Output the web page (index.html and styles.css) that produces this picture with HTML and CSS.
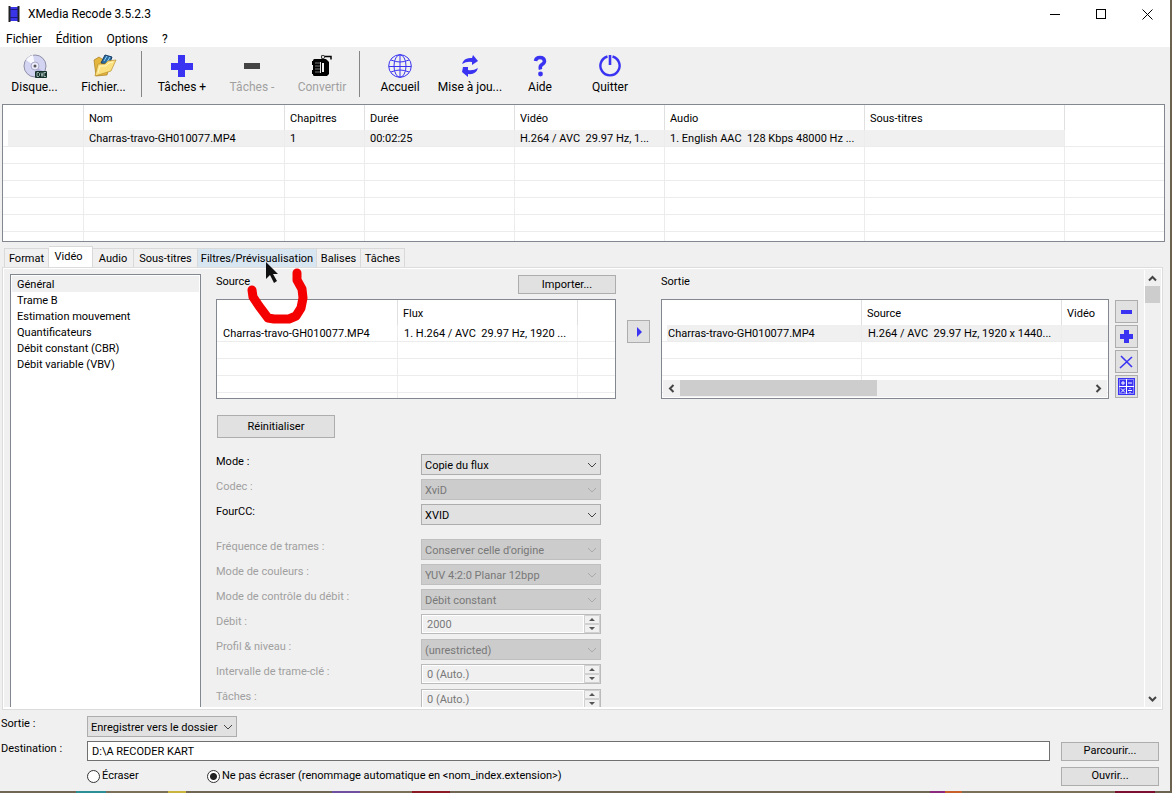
FILE: index.html
```html
<!DOCTYPE html>
<html lang="fr">
<head>
    <meta charset="UTF-8">
    <meta name="viewport" content="width=device-width, initial-scale=1.0">
    <title>XMedia Recode 3.5.2.3</title>
    <link rel="stylesheet" href="styles.css">
</head>
<body>

<div class="window">

<header class="titlebar">
    <svg class="app-icon" width="12" height="16" viewBox="0 0 12 16">
        <rect x="1" y="1" width="10" height="14" fill="#3a34e8"/>
        <path d="M1.5 0v16M10.5 0v16" stroke="#222" stroke-width="2"/>
        <path d="M2 3.500h8M2 11.500h8" stroke="#1c1a80"/>
    </svg>
    <h1>XMedia Recode 3.5.2.3</h1>
    <div class="window-buttons">
        <button aria-label="Réduire"><svg width="11" height="11"><path d="M0 5.500h10" stroke="#000"/></svg></button>
        <button aria-label="Agrandir"><svg width="11" height="11"><rect x="0.500" y="0.500" width="9" height="9" fill="none" stroke="#000"/></svg></button>
        <button aria-label="Fermer"><svg width="11" height="11"><path d="M0.500 0.500l10 10M10.500 0.500l-10 10" stroke="#000"/></svg></button>
    </div>
</header>

<nav class="menu">
    <button>Fichier</button>
    <button>Édition</button>
    <button>Options</button>
    <button>?</button>
</nav>

<div class="toolbar">
    <div class="tool-group files">
        <button class="tool">
            <svg width="26" height="24" viewBox="0 0 26 24">
                <circle cx="13" cy="12" r="11" fill="#d3d3f2" stroke="#8f8fa8"/>
                <path d="M13 12L4 6a11 11 0 0 1 7-5z" fill="#f8f8ff"/>
                <path d="M13 12l9 6a11 11 0 0 1-6 4z" fill="#b6b6dd"/>
                <circle cx="13" cy="12" r="4" fill="#ececfa" stroke="#a9a9c8"/>
                <circle cx="13" cy="12" r="1.500" fill="#555"/>
                <rect x="13" y="17" width="12" height="7" rx="1" fill="#16302c"/>
                <path d="M15 18.500v4h1.500l1-1v-2l-1-1zM19 18.500l1 4 1-4M24 18.500h-2v4h2" fill="none" stroke="#cfe5dd" stroke-width="0.700"/>
            </svg>
            <span>Disque...</span>
        </button>
        <button class="tool">
            <svg width="26" height="24" viewBox="0 0 26 24">
                <path d="M3 6l5-3 3 2 9 2-4 14-11 1z" fill="#e5b63c" stroke="#a67b1c" stroke-width="0.700"/>
                <path d="M10 9l4-8 7 2-3 8z" fill="#2c6ca4" stroke="#173c63"/>
                <path d="M13 7l3-5M16 8l3-5" stroke="#8fd3f2"/>
                <path d="M4 22l3-12 7 0 3-3 8-1-5 11z" fill="#fbe080" stroke="#b98e2c" stroke-width="0.700"/>
                <path d="M7 19l2-7 6 0 3-3 4-1" fill="none" stroke="#fff5bf"/>
            </svg>
            <span>Fichier...</span>
        </button>
    </div>
    <div class="tool-separator"></div>
    <div class="tool-group">
        <button class="tool">
            <svg width="24" height="24" viewBox="0 0 24 24"><path d="M8 1h7v8h8v7h-8v7h-7v-7h-7v-7h7z" fill="#3a34f2"/></svg>
            <span>Tâches +</span>
        </button>
        <button class="tool" disabled>
            <svg width="24" height="24" viewBox="0 0 24 24"><rect x="4" y="9" width="16" height="6" fill="#444"/></svg>
            <span>Tâches -</span>
        </button>
        <button class="tool" disabled>
            <svg width="24" height="24" viewBox="0 0 24 24">
                <rect x="3" y="5" width="14" height="17" rx="1.500" fill="#000"/>
                <path d="M2 7h2v4h-2zM2 16h2v4h-2z" fill="#000"/>
                <path d="M15 6h2l2 2v12l-2 2h-2z" fill="#000"/>
                <path d="M5 9h5M5 12h5M5 15h5M5 18h5" stroke="#777"/>
                <path d="M10.500 8v11" stroke="#ddd"/>
                <rect x="12" y="9" width="2" height="9" fill="#f0f0f0"/>
                <path d="M12 4.500v-3M13 2.500h8v3" fill="none" stroke="#000" stroke-width="1.500"/>
                <circle cx="13" cy="3" r="1.700" fill="#ddd" stroke="#222" stroke-width="0.800"/>
            </svg>
            <span>Convertir</span>
        </button>
    </div>
    <div class="tool-separator"></div>
    <div class="tool-group">
        <button class="tool">
            <svg width="26" height="24" viewBox="0 0 26 24">
                <g fill="none" stroke="#3a34f2">
                    <circle cx="13" cy="12" r="11.300"/>
                    <ellipse cx="13" cy="12" rx="6" ry="11.300"/>
                    <path d="M13 1v22M2 12.500h22M4 6q9 4 18 0M4 18q9-4 18 0"/>
                </g>
            </svg>
            <span>Accueil</span>
        </button>
        <button class="tool">
            <svg width="24" height="24" viewBox="0 0 24 24">
                <path d="M4 10Q6 3 14 4l1-3 5 6-6 4V8Q9 7 4 10z" fill="#3a34f2"/>
                <path d="M20 14q-2 7-10 6v3l-6-5 1-5 5 0v3q5 1 10-2z" fill="#3a34f2"/>
            </svg>
            <span>Mise à jou...</span>
        </button>
        <button class="tool">
            <svg width="24" height="24" viewBox="0 0 24 24">
                <path d="M7.500 7Q8 3.500 12 3.500T16.500 7Q16.500 9 14 10.500T12.500 15.500" fill="none" stroke="#3a34f2" stroke-width="3.500"/>
                <circle cx="12.500" cy="20" r="2.400" fill="#3a34f2"/>
            </svg>
            <span>Aide</span>
        </button>
        <button class="tool">
            <svg width="24" height="24" viewBox="0 0 24 24">
                <path d="M9.500 2.500a9.600 9.600 0 1 0 5 0" fill="none" stroke="#3a34f2" stroke-width="2.400"/>
                <path d="M12 1v10" stroke="#3a34f2" stroke-width="2.600"/>
            </svg>
            <span>Quitter</span>
        </button>
    </div>
</div>

<div class="list file-list">
    <table>
        <colgroup>
            <col class="col-icon"><col class="col-name"><col class="col-small"><col class="col-medium"><col class="col-medium"><col class="col-large"><col class="col-large"><col>
        </colgroup>
        <thead>
            <tr><th></th><th>Nom</th><th>Chapitres</th><th>Durée</th><th>Vidéo</th><th>Audio</th><th>Sous-titres</th><th></th></tr>
        </thead>
        <tbody>
            <tr class="selected"><td></td><td>Charras-travo-GH010077.MP4</td><td>1</td><td>00:02:25</td><td>H.264 / AVC  29.97 Hz, 1...</td><td>1. English AAC  128 Kbps 48000 Hz ...</td><td></td><td class="blank"></td></tr>
            <tr><td></td><td></td><td></td><td></td><td></td><td></td><td></td><td></td></tr>
            <tr><td></td><td></td><td></td><td></td><td></td><td></td><td></td><td></td></tr>
            <tr><td></td><td></td><td></td><td></td><td></td><td></td><td></td><td></td></tr>
            <tr><td></td><td></td><td></td><td></td><td></td><td></td><td></td><td></td></tr>
            <tr><td></td><td></td><td></td><td></td><td></td><td></td><td></td><td></td></tr>
            <tr><td></td><td></td><td></td><td></td><td></td><td></td><td></td><td></td></tr>
        </tbody>
    </table>
</div>

<nav class="tabs">
    <button>Format</button>
    <button class="active">Vidéo</button>
    <button>Audio</button>
    <button>Sous-titres</button>
    <button class="hover">Filtres/Prévisualisation</button>
    <button>Balises</button>
    <button>Tâches</button>
</nav>

<main class="panel">
    <div class="sections">
        <button class="current">Général</button>
        <button>Trame B</button>
        <button>Estimation mouvement</button>
        <button>Quantificateurs</button>
        <button>Débit constant (CBR)</button>
        <button>Débit variable (VBV)</button>
    </div>

    <div class="settings">
        <div class="streams">
            <section class="source">
                <div class="stream-head">
                    <h2>Source</h2>
                    <button class="button">Importer...</button>
                </div>
                <div class="list stream-list">
                    <table>
                        <colgroup><col class="col-source"><col class="col-flux"><col></colgroup>
                        <thead><tr><th></th><th>Flux</th><th></th></tr></thead>
                        <tbody>
                            <tr><td>Charras-travo-GH010077.MP4</td><td>1. H.264 / AVC  29.97 Hz, 1920 ...</td><td></td></tr>
                            <tr><td></td><td></td><td></td></tr>
                            <tr><td></td><td></td><td></td></tr>
                            <tr><td></td><td></td><td></td></tr>
                            <tr><td></td><td></td><td></td></tr>
                        </tbody>
                    </table>
                </div>
            </section>

            <button class="icon-button play" aria-label="Ajouter le flux"><svg width="16" height="16"><path d="M6 3v10l5-5z" fill="#3a34f2"/></svg></button>

            <section class="output">
                <div class="stream-head">
                    <h2>Sortie</h2>
                </div>
                <div class="list stream-list">
                    <table>
                        <colgroup><col class="col-large"><col class="col-large"><col></colgroup>
                        <thead><tr><th></th><th>Source</th><th>Vidéo</th></tr></thead>
                        <tbody>
                            <tr class="selected"><td>Charras-travo-GH010077.MP4</td><td>H.264 / AVC  29.97 Hz, 1920 x 1440...</td><td></td></tr>
                            <tr><td></td><td></td><td></td></tr>
                            <tr><td></td><td></td><td></td></tr>
                            <tr><td></td><td></td><td></td></tr>
                        </tbody>
                    </table>
                    <div class="hscroll">
                        <svg width="17" height="16"><path d="M10.500 5l-3.500 3.500 3.500 3.500" fill="none" stroke="#444" stroke-width="2"/></svg>
                        <div class="track"><div class="thumb"></div></div>
                        <svg width="17" height="16"><path d="M6.500 5l3.500 3.500-3.500 3.500" fill="none" stroke="#444" stroke-width="2"/></svg>
                    </div>
                </div>
            </section>

            <div class="stream-buttons">
                <button class="icon-button" aria-label="Supprimer"><svg width="17" height="17"><rect x="3" y="7" width="11" height="4" fill="#3a34f2"/></svg></button>
                <button class="icon-button" aria-label="Ajouter"><svg width="17" height="17"><path d="M6 2h5v4h4v5h-4v4h-5v-4h-4v-5h4z" fill="#3a34f2"/></svg></button>
                <button class="icon-button" aria-label="Effacer"><svg width="17" height="17"><path d="M3 3l11 11M14 4l-12 11" stroke="#3a34f2" stroke-width="1.600"/></svg></button>
                <button class="icon-button" aria-label="Calculatrice"><svg width="17" height="17">
                    <rect width="17" height="17" fill="#3a34f2"/>
                    <rect x="1.500" y="1.500" width="14" height="14" fill="none" stroke="#8a86f7"/>
                    <path d="M8.500 1v15M1 8.500h15M3 5h4M5 3v4M10 5h4M3 10.500l4 4M7 10.500l-4 4M10 12.500h4M12 10v1M12 14v1" stroke="#fff"/>
                </svg></button>
            </div>
        </div>

        <button class="button reset">Réinitialiser</button>

        <form class="options">
            <div class="row">
                <label for="mode">Mode :</label>
                <div class="combo"><select id="mode"><option>Copie du flux</option></select><svg width="10" height="6"><path d="M1 1l4 4 4-4"/></svg></div>
            </div>
            <div class="row disabled">
                <label for="codec">Codec :</label>
                <div class="combo"><select id="codec" disabled><option>XviD</option></select><svg width="10" height="6"><path d="M1 1l4 4 4-4"/></svg></div>
            </div>
            <div class="row last-of-group">
                <label for="fourcc">FourCC:</label>
                <div class="combo"><select id="fourcc"><option>XVID</option></select><svg width="10" height="6"><path d="M1 1l4 4 4-4"/></svg></div>
            </div>
            <div class="row disabled">
                <label for="fps">Fréquence de trames :</label>
                <div class="combo"><select id="fps" disabled><option>Conserver celle d'origine</option></select><svg width="10" height="6"><path d="M1 1l4 4 4-4"/></svg></div>
            </div>
            <div class="row disabled">
                <label for="colors">Mode de couleurs :</label>
                <div class="combo"><select id="colors" disabled><option>YUV 4:2:0 Planar 12bpp</option></select><svg width="10" height="6"><path d="M1 1l4 4 4-4"/></svg></div>
            </div>
            <div class="row disabled">
                <label for="rate-mode">Mode de contrôle du débit :</label>
                <div class="combo"><select id="rate-mode" disabled><option>Débit constant</option></select><svg width="10" height="6"><path d="M1 1l4 4 4-4"/></svg></div>
            </div>
            <div class="row disabled">
                <label for="rate">Débit :</label>
                <div class="spin"><input type="text" id="rate" value="2000" disabled><svg width="16" height="18"><path d="M0.500 0.500h15v8h-15zM0.500 9.500h15v8h-15z" fill="#f0f0f0" stroke="#d0d0d0"/><path d="M5 6l3-3 3 3zM5 12l3 3 3-3z" fill="#555"/></svg></div>
            </div>
            <div class="row disabled">
                <label for="profile">Profil &amp; niveau :</label>
                <div class="combo"><select id="profile" disabled><option>(unrestricted)</option></select><svg width="10" height="6"><path d="M1 1l4 4 4-4"/></svg></div>
            </div>
            <div class="row disabled">
                <label for="keyframe">Intervalle de trame-clé :</label>
                <div class="spin"><input type="text" id="keyframe" value="0 (Auto.)" disabled><svg width="16" height="18"><path d="M0.500 0.500h15v8h-15zM0.500 9.500h15v8h-15z" fill="#f0f0f0" stroke="#d0d0d0"/><path d="M5 6l3-3 3 3zM5 12l3 3 3-3z" fill="#555"/></svg></div>
            </div>
            <div class="row disabled">
                <label for="threads">Tâches :</label>
                <div class="spin"><input type="text" id="threads" value="0 (Auto.)" disabled><svg width="16" height="18"><path d="M0.500 0.500h15v8h-15zM0.500 9.500h15v8h-15z" fill="#f0f0f0" stroke="#d0d0d0"/><path d="M5 6l3-3 3 3zM5 12l3 3 3-3z" fill="#555"/></svg></div>
            </div>
        </form>
    </div>

    <div class="vscroll">
        <svg width="15" height="16"><path d="M4 10.500l3.500-3.500 3.500 3.500" fill="none" stroke="#444" stroke-width="2"/></svg>
        <div class="thumb"></div>
        <svg class="down" width="15" height="16"><path d="M4 6l3.500 3.500 3.500-3.500" fill="none" stroke="#444" stroke-width="2"/></svg>
    </div>
</main>

<footer class="destination">
    <label for="output-mode">Sortie :</label>
    <div class="combo"><select id="output-mode"><option>Enregistrer vers le dossier</option></select><svg width="10" height="6"><path d="M1 1l4 4 4-4"/></svg></div>

    <label for="path">Destination :</label>
    <input type="text" id="path" class="path" value="D:\A RECODER KART">
    <button class="button">Parcourir...</button>

    <div class="overwrite">
        <label><input type="radio" name="overwrite">Écraser</label>
        <label><input type="radio" name="overwrite" checked>Ne pas écraser (renommage automatique en &lt;nom_index.extension&gt;)</label>
    </div>
    <button class="button">Ouvrir...</button>
</footer>

</div>

<!-- Red mark and mouse pointer -->
<svg class="mark" width="70" height="66" viewBox="0 0 70 66">
    <path d="M10 31l1 7 6 9 9 12 6 1h15l7-3 5-8 2-10-1-9-5-9v-7" fill="none" stroke="#f50000" stroke-width="9" stroke-linecap="round" stroke-linejoin="round"/>
    <path d="M24 3v17l4-4 4 8 3-2-4-7h5z" fill="#111"/>
</svg>

</body>
</html>
```
FILE: styles.css
```css
* {
    box-sizing: border-box;
}

body {
    font-family: Tahoma, "Roboto", sans-serif;
    font-size: 11px;
    line-height: 14px;
    margin: 0;
    padding: 0 2px 2px 0;
    height: 100vh;
    overflow: hidden;
    color: #000;
    /* what shows of the desktop behind the window */
    background: linear-gradient(90deg, #6f6654 0 76px, #2c8f96 76px 106px, #7a6f58 106px 168px, #c9b43c 168px 186px, #6f6654 186px 332px, #6f4fa0 332px 360px, #7a6f58 360px 412px, #8a1a24 412px 450px, #6f6654 450px 930px, #8b2a7a 930px 945px, #c8602c 945px 962px, #7a6f58 962px 1115px, #7c0f30 1115px 1155px, #6b6350 1155px);
}

button, input, select {
    font: inherit;
    color: inherit;
    margin: 0;
    padding: 0;
    border: 0;
    border-radius: 0;
    background: none;
}

h1, h2 {
    margin: 0;
    font-size: inherit;
    font-weight: normal;
}

svg {
    display: block;
}

.window {
    height: 100%;
    display: flex;
    flex-direction: column;
    background: #f0f0f0;
}

/* Title bar and menu */
.titlebar, .menu, .toolbar {
    font-family: "Segoe UI", "Roboto", sans-serif;
    font-size: 12px;
}

.titlebar {
    display: flex;
    align-items: center;
    gap: 8px;
    height: 28px;
    padding-left: 8px;
    background: #fff;
}

.window-buttons {
    display: flex;
    margin-left: auto;
}

.window-buttons button {
    display: flex;
    justify-content: center;
    align-items: center;
    width: 46px;
    height: 28px;
}

.menu {
    display: flex;
    gap: 14px;
    height: 19px;
    padding: 2px 0 0 6px;
    background: #fff;
}

/* Toolbar */
.toolbar {
    display: flex;
    height: 57px;
    padding-top: 4px;
}

.tool-group {
    display: flex;
}

.tool {
    display: flex;
    flex-direction: column;
    align-items: center;
    gap: 2px;
    width: 70px;
    height: 46px;
    padding: 3px 0 0 2px;
    white-space: nowrap;
}

.files .tool {
    width: 69px;
    padding-left: 0;
}

.tool:disabled {
    color: #a0a0a0;
}

.tool-separator {
    width: 8px;
    height: 46px;
    padding-left: 3px;
}

.tool-separator::before {
    content: "";
    display: block;
    width: 1px;
    height: 100%;
    background: #868686;
}

/* Lists */
.list {
    overflow: hidden;
    border: 1px solid #828790;
    background: #fff;
}

.file-list {
    flex: none;
    height: 138px;
    margin: 0 5px 0 2px;
}

.list table {
    width: 100%;
    table-layout: fixed;
    border-collapse: separate;
    border-spacing: 0;
}

.list th, .list td {
    padding: 2px 0 0 5px;
    border-right: 1px solid #ececec;
    font-weight: normal;
    text-align: left;
    white-space: pre;
}

.list th {
    height: 25px;
    border-color: #e0e0e0;
}

.list td {
    height: 17px;
    border-bottom: 1px solid #ececec;
}

.stream-list td {
    padding-left: 6px;
}

.list th:last-child, .list td:last-child {
    border-right: 0;
}

.list .selected td {
    background: #f0f0f0;
}

.list .selected td:first-child {
    background: linear-gradient(90deg, #fff 5px, #f0f0f0 5px);
}

.list .selected .blank {
    background: #fff;
}

.col-icon { width: 81px; }
.col-name { width: 201px; }
.col-small { width: 80px; }
.col-medium { width: 150px; }
.col-large { width: 200px; }
.col-source { width: 181px; }
.col-flux { width: 180px; }

/* Tabs */
.tabs {
    display: grid;
    grid-template-columns: 45px 44px 41px 64px 119px 44px 44px;
    align-items: end;
    height: 25px;
    padding-left: 4px;
}

.tabs button {
    height: 19px;
    padding-top: 2px;
    border: 1px solid #d9d9d9;
    border-width: 1px 1px 0 0;
    white-space: nowrap;
}

.tabs button:first-child {
    border-left-width: 1px;
}

.tabs .active {
    height: 21px;
    padding: 0 4px 0 0;
    background: #fff;
}

.tabs .hover {
    background: #d8e6f2;
}

/* Panel */
.panel {
    display: flex;
    flex: 1;
    min-height: 0;
    margin: 0 7px 0 2px;
    border: 1px solid #dcdcdc;
    box-shadow: inset 1px 1px #fff, inset -1px -2px #fff;
    padding: 0 2px 2px 7px;
}

.sections {
    flex: none;
    width: 191px;
    margin-top: 6px;
    padding: 1px;
    border: 1px solid #828790;
    border-bottom: 0;
    background: #fff;
}

.sections button {
    display: block;
    width: 100%;
    height: 16px;
    padding: 2px 0 0 5px;
    text-align: left;
}

.sections .current {
    background: #f0f0f0;
}

.settings {
    flex: 1;
    min-width: 0;
    overflow: hidden;
    padding: 7px 6px 0 15px;
}

.streams {
    display: flex;
}

.source {
    flex: none;
    width: 400px;
}

.output {
    flex: 1;
    min-width: 0;
}

.stream-head {
    display: flex;
    justify-content: space-between;
    height: 24px;
}

.stream-list {
    position: relative;
    height: 100px;
}

.button {
    width: 98px;
    height: 19px;
    border: 1px solid #adadad;
    background: #e1e1e1;
}

.icon-button {
    display: flex;
    justify-content: center;
    align-items: center;
    width: 23px;
    height: 23px;
    border: 1px solid #adadad;
    background: #e1e1e1;
}

.play {
    margin: 45px 11px 0;
}

.stream-buttons {
    display: flex;
    flex-direction: column;
    gap: 2px;
    margin: 25px 0 0 6px;
}

.hscroll {
    position: absolute;
    left: 1px;
    right: 1px;
    bottom: 1px;
    display: flex;
    height: 17px;
    background: #f0f0f0;
}

.track {
    flex: 1;
}

.hscroll .thumb {
    width: 48%;
    height: 16px;
    background: #cdcdcd;
}

.vscroll {
    display: flex;
    flex-direction: column;
    width: 16px;
    margin-top: 2px;
    border-left: 1px solid #fff;
}

.vscroll .thumb {
    height: 17px;
    background: #cdcdcd;
}

.vscroll .down {
    margin-top: auto;
}

.reset {
    width: 118px;
    height: 23px;
    margin: 16px 0 16px 1px;
}

/* Encoder options */
.row {
    display: flex;
    height: 25px;
}

.row label {
    width: 205px;
    padding-top: 1px;
}

.last-of-group {
    margin-bottom: 10px;
}

.row.disabled {
    color: #a0a0a0;
}

.combo {
    display: grid;
    width: 180px;
    height: 21px;
}

.combo select, .combo svg {
    grid-area: 1 / 1;
}

.combo select {
    appearance: none;
    width: 100%;
    padding: 2px 0 0 3px;
    border: 1px solid #adadad;
    background: #e1e1e1;
    opacity: 1;
}

.combo svg {
    align-self: center;
    justify-self: end;
    margin-right: 4px;
    fill: none;
    stroke: #444;
    pointer-events: none;
}

.combo select:disabled {
    border-color: #bfbfbf;
    background: #ccc;
    color: #787878;
}

.disabled .combo svg {
    stroke: #aaa;
}

.spin {
    display: flex;
    width: 180px;
    height: 20px;
    border: 1px solid #bbb;
}

.spin input {
    flex: 1;
    min-width: 0;
    padding: 2px 0 0 4px;
    border: 1px solid #fff;
    color: #787878;
}

/* Destination */
.destination {
    display: grid;
    grid-template-columns: 86px 1fr 98px;
    grid-auto-rows: 20px;
    gap: 5px 0;
    height: 81px;
    padding: 6px 11px 0 1px;
}

.destination > label {
    padding-top: 1px;
}

.destination .combo {
    grid-column: 2 / 4;
    width: 150px;
}

.path {
    margin-right: 11px;
    padding: 2px 0 0 4px;
    border: 1px solid #707070;
    background: #fff;
}

.destination .button {
    align-self: center;
}

.overwrite {
    grid-column: 2;
    display: flex;
    align-items: center;
}

.overwrite label {
    display: flex;
    align-items: center;
    gap: 2px;
    min-width: 120px;
}

.overwrite input {
    appearance: none;
    width: 13px;
    height: 13px;
    border: 1px solid #333;
    border-radius: 50%;
    background: #fff;
}

.overwrite input:checked {
    background: radial-gradient(circle, #222 3px, #fff 4px);
}

.mark {
    position: absolute;
    left: 242px;
    top: 259px;
    pointer-events: none;
}
```
